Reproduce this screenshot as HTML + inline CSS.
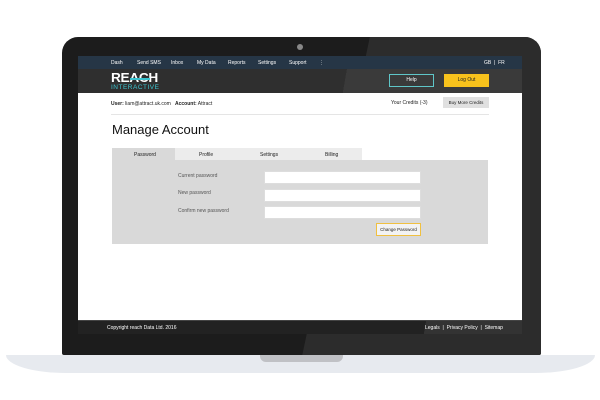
<!DOCTYPE html><html><head><style>
*{margin:0;padding:0;box-sizing:border-box}
body{width:600px;height:400px;background:#fff;position:relative;overflow:hidden;font-family:"Liberation Sans",sans-serif}
.a{position:absolute}
.t{font-size:5px;color:#fff;position:absolute}
.k{font-size:5px;color:#222;position:absolute}
.in{position:absolute;left:264px;width:157px;height:13px;background:#fff;border:1px solid #ddd}
</style></head><body>
<div class="a" style="left:6px;top:355px;width:589px;height:18px;background:#e7eaef;border-radius:0 0 60px 60px/0 0 18px 18px"></div>
<div class="a" style="left:260px;top:355px;width:83px;height:7px;background:#c0c1c5;border-radius:0 0 6px 6px"></div>
<div class="a" style="left:62px;top:37px;width:479px;height:318px;background:#1c1c1c;border-radius:16px 16px 2px 2px;overflow:hidden">
<div class="a" style="left:310px;top:-10px;width:300px;height:340px;background:#2c2c2c;transform:skewX(-12deg);transform-origin:top left"></div>
</div>
<div class="a" style="left:297px;top:44px;width:6px;height:6px;border-radius:50%;background:#888"></div>
<div class="a" style="left:78px;top:56px;width:444px;height:264px;background:#fff;overflow:hidden">
<div class="a" style="left:0;top:0;width:444px;height:13px;background:#263646"></div>
<span class="t" style="left:33px;top:4px">Dash</span><span class="t" style="left:59px;top:4px">Send SMS</span><span class="t" style="left:93px;top:4px">Inbox</span><span class="t" style="left:119px;top:4px">My Data</span><span class="t" style="left:150px;top:4px">Reports</span><span class="t" style="left:180px;top:4px">Settings</span><span class="t" style="left:211px;top:4px">Support</span><span class="t" style="left:241px;top:4px">⋮</span><span class="t" style="left:406px;top:4px">GB &nbsp;| &nbsp;FR</span>
<div class="a" style="left:0;top:13px;width:444px;height:24px;background:linear-gradient(100deg,#2f2f2f 60%,#3a3a3a 60%)"></div>
<div class="a" style="left:33px;top:14px;font-weight:900;font-size:13px;color:#fff;letter-spacing:-0.3px;transform:scaleX(1.05);transform-origin:left">REACH</div>
<div class="a" style="left:33px;top:28px;font-size:6.5px;color:#3cc4d0;letter-spacing:0.5px">INTERACTIVE</div>
<div class="a" style="left:52px;top:22px;width:20px;height:2px;background:#3cc4d0"></div>
<div class="a" style="left:311px;top:18px;width:45px;height:13px;border:1.5px solid #5fc6c8;background:#3a3a3a;color:#fff;font-size:5px;text-align:center;line-height:10px">Help</div>
<div class="a" style="left:366px;top:18px;width:45px;height:13px;background:#f8c21c;color:#222;font-size:5px;text-align:center;line-height:13px">Log Out</div>
<span class="k" style="left:33px;top:45px"><b>User:</b> liam@attract.uk.com &nbsp; <b>Account:</b> Attract</span>
<span class="k" style="left:313px;top:44px">Your Credits (-3)</span>
<div class="a" style="left:365px;top:41px;width:46px;height:11px;background:#e0e0e0;font-size:4.5px;text-align:center;line-height:11px;color:#222">Buy More Credits</div>
<div class="a" style="left:33px;top:58px;width:378px;height:1px;background:#e5e5e5"></div>
<div class="a" style="left:34px;top:66px;font-size:13px;color:#111">Manage Account</div>
<div class="a" style="left:34px;top:92px;width:250px;height:12px;background:#ececec"></div>
<div class="a" style="left:34px;top:92px;width:63px;height:12px;background:#d9d9d9"></div>
<span class="k" style="left:56px;top:96px">Password</span><span class="k" style="left:121px;top:96px">Profile</span><span class="k" style="left:182px;top:96px">Settings</span><span class="k" style="left:247px;top:96px">Billing</span>
<div class="a" style="left:34px;top:104px;width:376px;height:84px;background:#d9d9d9"></div>
<span class="k" style="left:100px;top:117px;color:#555">Current password</span><span class="k" style="left:100px;top:134px;color:#555">New password</span><span class="k" style="left:100px;top:152px;color:#555">Confirm new password</span>
</div>
<div class="in" style="top:171px"></div><div class="in" style="top:189px"></div><div class="in" style="top:206px"></div>
<div class="a" style="left:376px;top:223px;width:45px;height:13px;border:1px solid #f0c040;background:#f3f3f3;font-size:4.5px;text-align:center;line-height:11px;color:#222">Change Password</div>
<div class="a" style="left:78px;top:320px;width:444px;height:14px;background:linear-gradient(100deg,#222 78%,#333 78%);border-top:1px solid #444"></div>
<span class="t" style="left:107px;top:325px">Copyright reach Data Ltd. 2016</span>
<span class="t" style="left:425px;top:325px">Legals &nbsp;| &nbsp;Privacy Policy &nbsp;| &nbsp;Sitemap</span>
</body></html>
